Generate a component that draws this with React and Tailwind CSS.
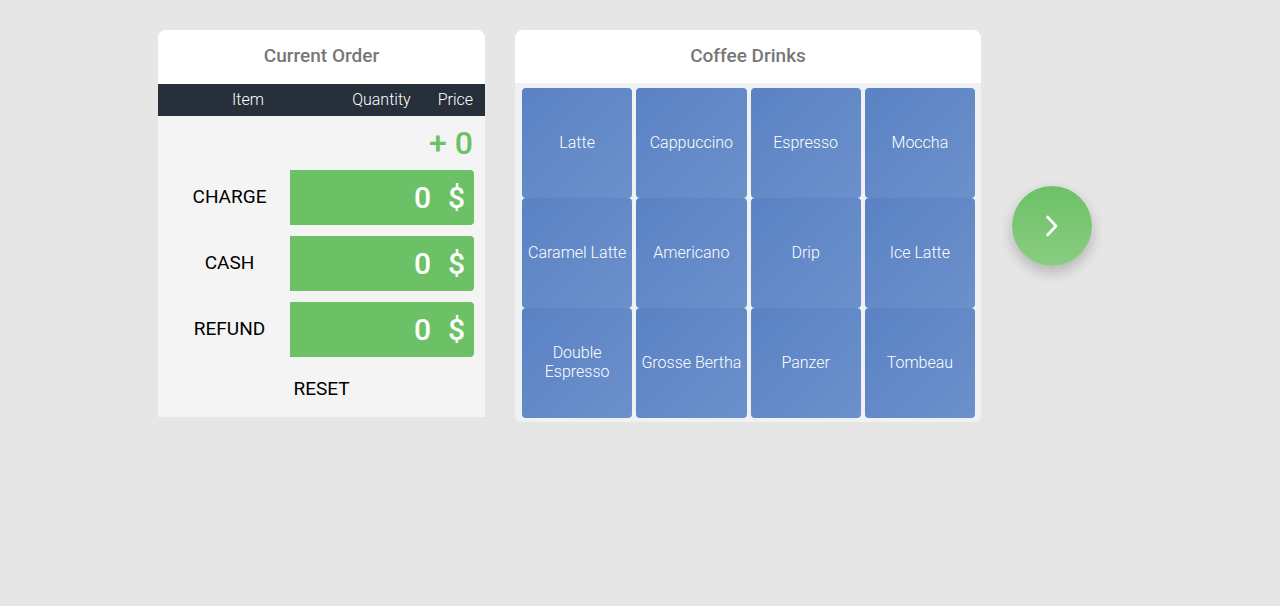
const drinks = [
  'Latte',
  'Cappuccino',
  'Espresso',
  'Moccha',
  'Caramel Latte',
  'Americano',
  'Drip',
  'Ice Latte',
  'Double Espresso',
  'Grosse Bertha',
  'Panzer',
  'Tombeau',
]

function AmountRow({ label }) {
  return (
    <div className="flex h-[55px] items-center">
      <div className="w-[132px] pl-[11px] text-center text-[19px] text-black">{label}</div>
      <div className="flex h-full w-[184px] items-center justify-end rounded-r-[4px] bg-[#6cc167] pr-[9px] text-[30px] font-medium text-white">
        <span>0</span>
        <span className="ml-[17px]">$</span>
      </div>
    </div>
  )
}

function CurrentOrder() {
  return (
    <div className="w-[327px] shrink-0">
      <div className="flex h-[54px] items-center justify-center rounded-t-[8px] bg-white pb-[2px] text-[19px] font-medium text-[#777777]">
        Current Order
      </div>
      <div className="flex h-[32px] items-center bg-[#272f3b] text-[16px] font-light text-white">
        <span className="w-[180px] text-center">Item</span>
        <span className="ml-auto">Quantity</span>
        <span className="ml-[27px] mr-[12px]">Price</span>
      </div>
      <div className="bg-[#f4f4f4] pb-[13px]">
        <div className="flex h-[54px] items-center justify-end pr-[12px] text-[32px] font-medium leading-none text-[#6cc167]">
          + 0
        </div>
        <div className="flex flex-col gap-[11px]">
          <AmountRow label="CHARGE" />
          <AmountRow label="CASH" />
          <AmountRow label="REFUND" />
        </div>
        <div className="mt-[17px] text-center text-[19px] leading-[30px] text-black">RESET</div>
      </div>
    </div>
  )
}

function CoffeeDrinks() {
  return (
    <div className="w-[466px] shrink-0">
      <div className="flex h-[53px] items-center justify-center rounded-t-[8px] bg-white text-[19px] font-medium text-[#777777]">
        Coffee Drinks
      </div>
      <div className="grid grid-cols-4 gap-x-[4px] rounded-b-[6px] bg-[#f0f1f2] pb-[4px] pl-[7px] pr-[6px] pt-[5px]">
        {drinks.map((drink) => (
          <button
            key={drink}
            type="button"
            className={`flex h-[110px] items-center justify-center rounded-[4px] bg-gradient-to-br from-[#5a82c4] to-[#6c90cb] pb-[2px] text-center text-[16px] font-light leading-[19px] text-white ${
              drink === 'Double Espresso' ? 'px-6' : 'px-0'
            }`}
          >
            {drink}
          </button>
        ))}
      </div>
    </div>
  )
}

export default function App() {
  return (
    <div
      className="min-h-[606px] bg-[#e6e6e6]"
      style={{ fontFamily: 'Roboto, "Noto Sans", "Liberation Sans", sans-serif' }}
    >
      <div className="flex items-start pl-[158px] pt-[30px]">
        <CurrentOrder />
        <div className="ml-[30px]">
          <CoffeeDrinks />
        </div>
        <button
          type="button"
          className="ml-[31px] flex h-[80px] w-[80px] items-center justify-center self-center rounded-full bg-gradient-to-b from-[#6cc167] to-[#8acd81] shadow-[0_6px_14px_rgba(0,0,0,0.22)]"
        >
          <svg width="14" height="22" viewBox="0 0 14 22" fill="none" aria-hidden="true">
            <path d="m2.5 2 8.5 9-8.5 9" stroke="white" strokeWidth="2.6" strokeLinecap="round" strokeLinejoin="round" />
          </svg>
        </button>
      </div>
    </div>
  )
}
